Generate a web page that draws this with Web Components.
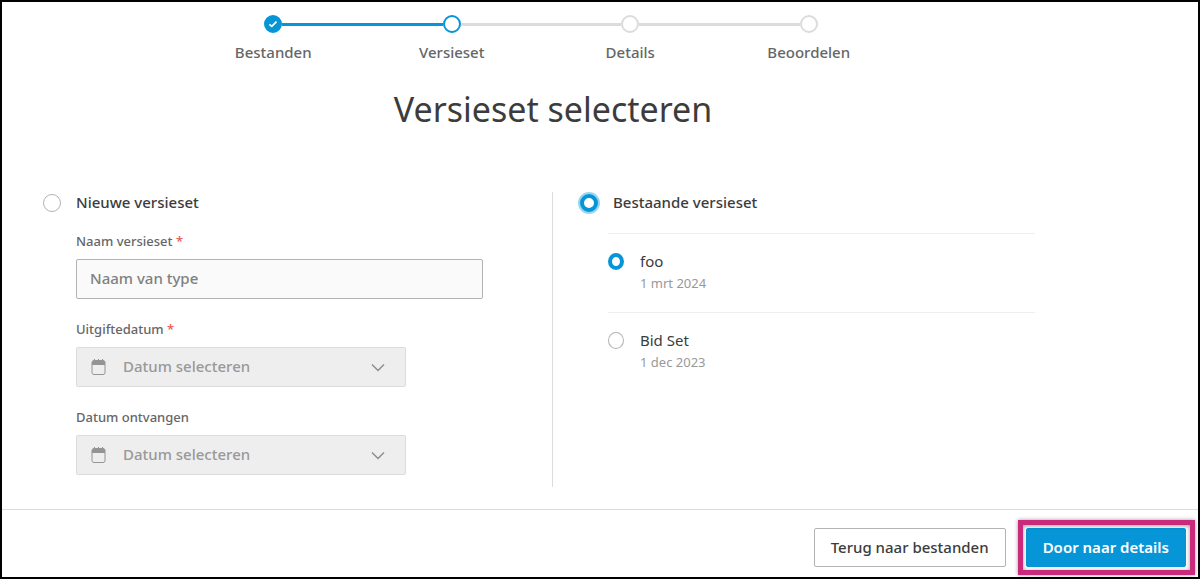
<!DOCTYPE html>
<html lang="nl">
<head>
<meta charset="utf-8">
<meta name="viewport" content="width=device-width, initial-scale=1">
<title>Versieset selecteren</title>
<style>
  body {
    margin: 0;
    background: #fff;
    color: #3c3c3c;
    font: 15px/22px "Noto Sans", "Open Sans", sans-serif;
    --blue: #0696d7;
    --line: #dcdcdc;
    --muted: #999;
  }
</style>
</head>
<body>
<wizard-frame>
  <wizard-steps slot="steps">
    <wizard-step state="done">Bestanden</wizard-step>
    <wizard-step state="current">Versieset</wizard-step>
    <wizard-step>Details</wizard-step>
    <wizard-step>Beoordelen</wizard-step>
  </wizard-steps>
  <span slot="title">Versieset selecteren</span>
  <option-panel slot="new" label="Nieuwe versieset">
    <text-field label="Naam versieset" placeholder="Naam van type" required></text-field>
    <date-field label="Uitgiftedatum" required></date-field>
    <date-field label="Datum ontvangen"></date-field>
  </option-panel>
  <option-panel slot="existing" label="Bestaande versieset" checked>
    <version-item name="foo" date="1 mrt 2024" checked></version-item>
    <version-item name="Bid Set" date="1 dec 2023"></version-item>
  </option-panel>
  <action-button slot="actions">Terug naar bestanden</action-button>
  <action-button slot="actions" primary highlighted>Door naar details</action-button>
</wizard-frame>

<script>
  class BaseElement extends HTMLElement {
    constructor() {
      super();
      this.attachShadow({ mode: "open" });
    }
    connectedCallback() {
      this.shadowRoot.innerHTML = `<style>*{box-sizing:border-box}${this.css()}</style>${this.html()}`;
    }
    attr(name) { return this.getAttribute(name) || ""; }
    flag(name) { return this.hasAttribute(name); }
  }

  const radioCss = `
    input[type=radio] {
      appearance: none; flex: none; width: 18px; height: 18px; margin: 0;
      border: 1px solid #b3b3b3; border-radius: 50%; background: #fff;
    }
    input[type=radio]:checked { border: 4px solid var(--blue); }`;

  const fieldCss = `
    :host { display: flex; flex-direction: column; gap: 10px; }
    label { font-size: 13px; line-height: 16px; font-weight: 500; color: #666; }
    .req { color: #eb5555; }`;

  customElements.define("wizard-frame", class extends BaseElement {
    css() {
      return `
        :host { display: flex; flex-direction: column; box-sizing: border-box; min-height: 100vh; border: 2px solid #000; }
        main { flex: 1; padding: 13px 135px 22px 41px; }
        .steps { padding-right: 24px; }
        h1 { margin: 20px 0 0; font-size: 34px; line-height: 52px; font-weight: 400; text-align: center; }
        .columns { display: grid; grid-template-columns: 1fr 1fr; margin-top: 57px; }
        .new { padding: 0 69px 12px 0; border-right: 1px solid var(--line); }
        .existing { padding: 0 28px 0 27px; }
        footer { display: flex; justify-content: flex-end; gap: 20px; padding: 18px 12px 10px; border-top: 1px solid var(--line); }`;
    }
    html() {
      return `
        <main>
          <div class="steps"><slot name="steps"></slot></div>
          <h1><slot name="title"></slot></h1>
          <div class="columns">
            <section class="new"><slot name="new"></slot></section>
            <section class="existing"><slot name="existing"></slot></section>
          </div>
        </main>
        <footer><slot name="actions"></slot></footer>`;
    }
  });

  customElements.define("wizard-steps", class extends BaseElement {
    css() { return `:host { display: flex; width: 714px; max-width: 100%; margin: 0 auto; }`; }
    html() { return `<slot></slot>`; }
  });

  customElements.define("wizard-step", class extends BaseElement {
    css() {
      return `
        :host { flex: 1; display: flex; flex-direction: column; gap: 8px; color: #666; font-weight: 500; text-align: center; }
        .track { display: grid; grid-template-columns: 1fr 18px 1fr; align-items: center; }
        .bar { height: 3px; background: var(--line); }
        .dot { height: 18px; border: 2px solid var(--line); border-radius: 50%; background: #fff; }
        :host([state]) .dot { border-color: var(--blue); }
        :host([state=done]) .dot { background: var(--blue); }
        :host([state]) .before, :host([state=done]) .after { background: var(--blue); }
        :host(:first-child) .before, :host(:last-child) .after { background: none; }
        svg { display: block; width: 14px; height: 14px; }`;
    }
    html() {
      const tick = `<svg viewBox="0 0 14 14" aria-hidden="true"><path d="M3.4 7.3 5.8 9.4 10.5 4.7" fill="none" stroke="#fff" stroke-width="1.7"/></svg>`;
      return `
        <div class="track">
          <span class="bar before"></span>
          <span class="dot">${this.attr("state") === "done" ? tick : ""}</span>
          <span class="bar after"></span>
        </div>
        <span class="label"><slot></slot></span>`;
    }
  });

  customElements.define("option-panel", class extends BaseElement {
    css() {
      return `${radioCss}
        :host { display: block; }
        .head { display: flex; align-items: center; gap: 15px; height: 22px; font-weight: 500; }
        .head label { padding-bottom: 2px; }
        .head input:checked { box-shadow: 0 0 0 2px #9bd5ef; }
        .body { display: flex; flex-direction: column; gap: 22px; padding: 19px 0 0 33px; }
        :host([checked]) .body { gap: 0; padding-left: 28px; }`;
    }
    html() {
      return `
        <div class="head">
          <input type="radio" id="choice" ${this.flag("checked") ? "checked" : ""}>
          <label for="choice">${this.attr("label")}</label>
        </div>
        <div class="body"><slot></slot></div>`;
    }
  });

  customElements.define("text-field", class extends BaseElement {
    css() {
      return `${fieldCss}
        input {
          width: 100%; height: 40px; padding: 0 13px 2px; border: 1px solid #b3b3b3; border-radius: 2px;
          background: #fafafa; color: #3c3c3c; font: inherit; font-weight: 500;
        }
        input::placeholder { color: #808080; opacity: 1; }`;
    }
    html() {
      return `
        <label for="field">${this.attr("label")} ${this.flag("required") ? '<span class="req">*</span>' : ""}</label>
        <input id="field" type="text" placeholder="${this.attr("placeholder")}">`;
    }
  });

  customElements.define("date-field", class extends BaseElement {
    css() {
      return `${fieldCss}
        .control { display: grid; grid-template-columns: 46px 1fr 54px; align-items: center; width: 330px; max-width: 100%; }
        select {
          grid-area: 1 / 1 / 2 / 4; width: 100%; height: 40px; padding: 0 54px 2px 46px; appearance: none;
          border: 1px solid var(--line); border-radius: 2px; background: #eee;
          color: var(--muted); font: inherit; font-weight: 500; opacity: 1;
        }
        svg { z-index: 1; pointer-events: none; width: 16px; height: 18px; }
        .calendar { grid-area: 1 / 1; margin-left: 15px; }
        .chevron { grid-area: 1 / 3; margin-left: 18px; }`;
    }
    html() {
      return `
        <label for="date">${this.attr("label")} ${this.flag("required") ? '<span class="req">*</span>' : ""}</label>
        <div class="control">
          <select id="date" disabled><option>Datum selecteren</option></select>
          <svg class="calendar" viewBox="0 0 16 18" aria-hidden="true">
            <rect x="1" y="2.5" width="13" height="14" rx="2" fill="none" stroke="#949494"/>
            <path d="M1 7V4.5a2 2 0 0 1 2-2h9a2 2 0 0 1 2 2V7zM3 1h1v2H3zM7 1h1v2H7zM11 1h1v2h-1z" fill="#949494"/>
          </svg>
          <svg class="chevron" viewBox="0 0 16 18" aria-hidden="true">
            <path d="M2 6.5 8 12.5 14 6.5" fill="none" stroke="#8c8c8c" stroke-width="1.4"/>
          </svg>
        </div>`;
    }
  });

  customElements.define("version-item", class extends BaseElement {
    css() {
      return `${radioCss}
        :host { display: flex; align-items: flex-start; gap: 16px; padding: 16px 0; border-top: 1px solid #eee; }
        input[type=radio] { width: 16px; height: 17px; margin-top: 3px; }
        label { display: flex; flex-direction: column; padding-bottom: 2px; }
        .name { line-height: 22px; }
        .date { font-size: 13px; line-height: 22px; color: var(--muted); }`;
    }
    html() {
      return `
        <input type="radio" id="version" ${this.flag("checked") ? "checked" : ""}>
        <label for="version"><span class="name">${this.attr("name")}</span><span class="date">${this.attr("date")}</span></label>`;
    }
  });

  customElements.define("action-button", class extends BaseElement {
    css() {
      return `
        :host { display: block; position: relative; }
        button {
          display: block; height: 39px; padding: 0 16px 2px; border: 1px solid #b3b3b3; border-radius: 2px;
          background: #fff; color: #3c3c3c; font: inherit; font-weight: 500;
        }
        :host([primary]) button { border-color: var(--blue); background: var(--blue); color: #fff; font-weight: 600; }
        :host([highlighted])::after {
          content: ""; position: absolute; inset: -8px -9px -8px -8px; border: 5px solid #c92a7c;
          box-shadow: 0 0 4px #0006, inset 0 1px 4px #0006; pointer-events: none;
        }`;
    }
    html() { return `<button type="button"><slot></slot></button>`; }
  });
</script>
</body>
</html>
